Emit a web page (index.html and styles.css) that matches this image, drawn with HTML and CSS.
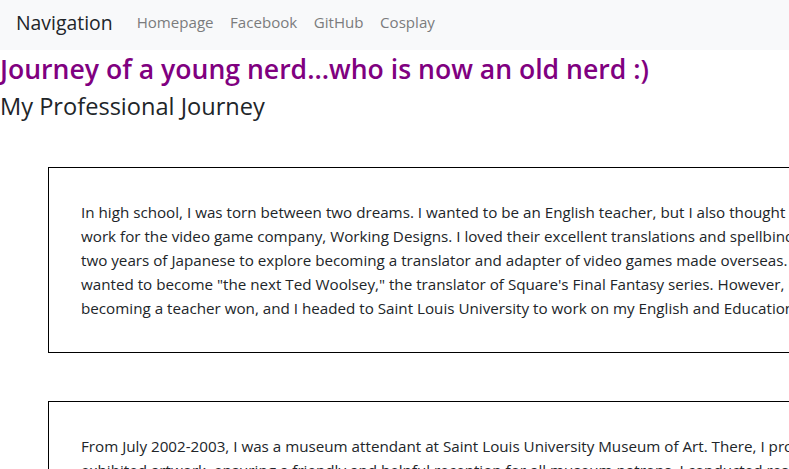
FILE: index.html
```html
<!DOCTYPE html>
<html lang="en">
<head>
<meta charset="utf-8">
<title>Journey of a young nerd</title>
<link rel="stylesheet" href="styles.css">
</head>
<body>
<nav class="navbar">
  <a class="brand" href="#">Navigation</a>
  <ul class="nav-links">
    <li><a href="#">Homepage</a></li>
    <li><a href="#">Facebook</a></li>
    <li><a href="#">GitHub</a></li>
    <li><a href="#">Cosplay</a></li>
  </ul>
</nav>
<main class="page">
  <h1 class="title">Journey of a young nerd...who is now an old nerd :)</h1>
  <h2 class="subtitle">My Professional Journey</h2>
  <section class="story">
    <p>In high school, I was torn between two dreams. I wanted to be an English teacher, but I also thought about trying to<br>work for the video game company, Working Designs. I loved their excellent translations and spellbinding stories, so I took<br>two years of Japanese to explore becoming a translator and adapter of video games made overseas. I<br>wanted to become "the next Ted Woolsey," the translator of Square's Final Fantasy series. However, in the end, my dream of<br>becoming a teacher won, and I headed to Saint Louis University to work on my English and Education degrees.</p>
  </section>
  <section class="story">
    <p>From July 2002-2003, I was a museum attendant at Saint Louis University Museum of Art. There, I protected the<br>exhibited artwork, ensuring a friendly and helpful reception for all museum patrons. I conducted research on the collection<br>and assisted with the installation of new exhibits.</p>
  </section>
</main>
</body>
</html>
```
FILE: styles.css
```css
html, body {
  margin: 0;
  padding: 0;
  overflow-x: hidden;
}
body {
  font-family: "Open Sans", "Noto Sans", sans-serif;
  color: #212529;
  background: #fff;
}
.navbar {
  display: flex;
  align-items: center;
  height: 44px;
  padding: 0 16px 6px;
  background: #f8f9fa;
}
.brand {
  font-size: 19.4px;
  color: #212529;
  text-decoration: none;
  margin-right: 24px;
}
.nav-links {
  display: flex;
  gap: 16.5px;
  list-style: none;
  margin: 0;
  padding: 0;
}
.nav-links a {
  font-size: 15.1px;
  color: #7b7c7d;
  text-decoration: none;
}
.title {
  margin: 0;
  font-size: 26.6px;
  font-weight: 600;
  line-height: 38px;
  color: #800080;
}
.subtitle {
  margin: 0;
  font-size: 23.6px;
  font-weight: 500;
  line-height: 36px;
}
.story {
  width: 1000px;
  margin: 43px 0 48px 48px;
  padding: 32px;
  border: 1px solid #000;
}
.story p {
  margin: 0;
  font-size: 15.2px;
  line-height: 24px;
  white-space: nowrap;
}
```
